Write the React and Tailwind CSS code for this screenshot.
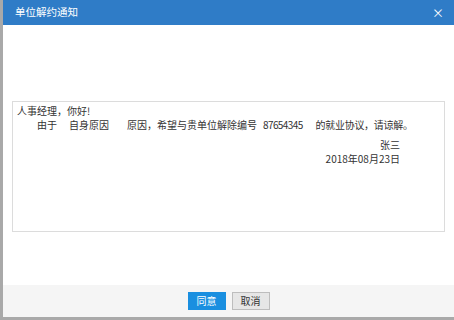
import React from 'react';

const font = { fontFamily: '"Noto Sans CJK SC", "Liberation Sans", sans-serif' };

function App() {
  return (
    <div className="w-[454px] h-[320px] flex bg-white overflow-hidden" style={font}>
      <div className="w-[3px] h-full bg-[#a9a9a9]"></div>
      <div className="flex-1 flex flex-col">
        <header className="h-[25px] bg-[#2f7cc7] flex items-center justify-between pl-[12px] pr-[10px] text-white">
          <span className="text-[10.5px] leading-none">单位解约通知</span>
          <span className="text-[12px] leading-none">×</span>
        </header>
        <main className="flex-1 px-[9px] pt-[76px]">
          <div className="h-[131px] border border-[#dcdcdc] px-[4px] pt-[2px] text-[10px] leading-[14px] text-[#333]">
            <div>人事经理，你好!</div>
            <div className="pl-[20px] flex whitespace-nowrap">
              <span>由于</span>
              <span className="ml-[12px]">自身原因</span>
              <span className="ml-[18px]">原因，希望与贵单位解除编号</span>
              <span className="ml-[6px] tracking-[-0.6px]">87654345</span>
              <span className="ml-[13px] tracking-[-0.3px]">的就业协议，请谅解。</span>
            </div>
            <div className="flex flex-col items-end pr-[40px] mt-[6px]">
              <span>张三</span>
              <span>2018年08月23日</span>
            </div>
          </div>
        </main>
        <footer className="h-[35px] bg-[#f5f5f5] border-b-[3px] border-[#a9a9a9] flex items-center justify-center gap-[6px] pb-[1px]">
          <button className="w-[38px] h-[18px] bg-[#1a8fe0] text-white text-[10px] leading-none">同意</button>
          <button className="w-[38px] h-[18px] bg-[#e6e6e6] border border-[#bdbdbd] text-[#333] text-[10px] leading-none">取消</button>
        </footer>
      </div>
    </div>
  );
}

export default App;
